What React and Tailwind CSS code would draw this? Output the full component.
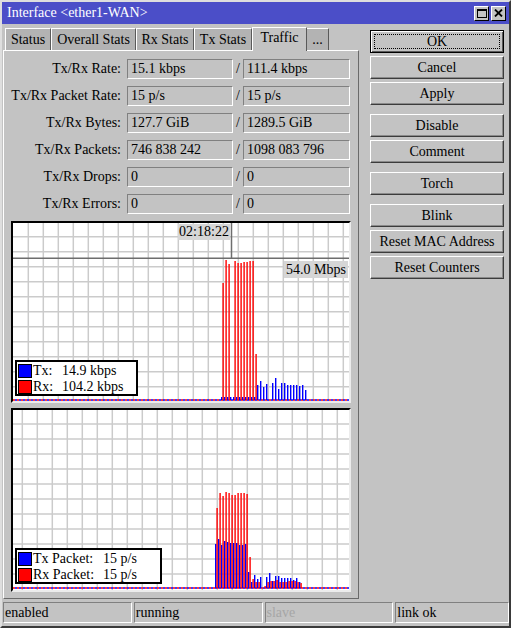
const G1_RED = [283, 260, 264, null, 261, 263, 263, 262, 262, 261, 261, 354];
const G1_BLUE = [
  397, 397, 397, 397, 397, 397, 397, 397, 397, 397, 397, 397,
  385, 381, 387, 384, null, 383, 378, 389, 383, 383, 385, 385, 385, 385, 386, 385, 390,
];
const G2_RED = [
  508, 493, 496, 492, 493, 495, 495, 493, 493, 493, 494, 557,
  579, 582, 582, null, 586, 582, 581, 581, 580, 582, 582, 582, 581, 581, 581, 582, 583,
];
const G2_BLUE = [
  544, 539, 545, 541, 542, 543, 543, 543, 545, 545, 544, 572,
  582, 575, 579, 577, null, 577, 573, 581, 576, 576, 578, 578, 578, 578, 580, 578, 582,
];

function range(start, end, step) {
  const out = [];
  for (let v = start; v <= end; v += step) out.push(v);
  return out;
}

function Chart({ ox, oy, w, h, gx, gy, base, blueX, red, blue, dark, children }) {
  return (
    <div className="relative bg-white" style={{ width: w, height: h }}>
      <svg width={w} height={h} viewBox={`${ox} ${oy} ${w} ${h}`} className="absolute inset-0">
        {range(gx, ox + w, 15).map((x) => (
          <line key={"v" + x} x1={x} y1={oy} x2={x} y2={oy + h} stroke="#cbcbcb" strokeWidth="1.5" />
        ))}
        {range(gy, base - 4, 15).map((y) => (
          <line key={"h" + y} x1={ox} y1={y} x2={ox + w} y2={y} stroke="#cbcbcb" strokeWidth="1.5" />
        ))}
        {dark && (
          <g stroke="#6e6e6e" strokeWidth="1.5">
            <line x1={ox} y1={dark.y} x2={ox + w} y2={dark.y} />
            <line x1={dark.x} y1={oy} x2={dark.x} y2={dark.y} />
          </g>
        )}
        <line x1={ox} y1={base} x2={ox + w} y2={base} stroke="#ff0000" strokeWidth="1.5" strokeDasharray="2 2" />
        <line x1={ox} y1={base} x2={ox + w} y2={base} stroke="#0000ff" strokeWidth="1.5" strokeDasharray="2 2" strokeDashoffset="2" />
        {blue.map((t, i) =>
          t == null ? null : (
            <rect key={"b" + i} x={blueX + 3 * i} y={t} width="1.4" height={base - t} fill="#0000ff" />
          )
        )}
        {red.map((t, i) =>
          t == null ? null : (
            <rect key={"r" + i} x={blueX + 1.4 + 3 * i} y={t} width="1.4" height={base - t} fill="#ff0000" />
          )
        )}
      </svg>
      {children}
    </div>
  );
}

function Legend({ rows, labelW, className }) {
  return (
    <div className={`absolute left-[2px] bg-white border-2 border-black pl-px pt-[2px] flex flex-col gap-[2px] ${className}`}>
      {rows.map((r) => (
        <div key={r.label} className="flex items-center h-[14px]">
          <div className={`w-[14px] h-[14px] border border-black ${r.color}`} />
          <div className="pl-px leading-[14px]" style={{ width: labelW }}>{r.label}</div>
          <div className="leading-[14px] pr-[6px]">{r.value}</div>
        </div>
      ))}
    </div>
  );
}

function Field({ children }) {
  return (
    <div className="h-5 border border-t-[#808080] border-l-[#808080] border-b-white border-r-white pl-[3px] leading-[18px] whitespace-nowrap overflow-hidden">
      {children}
    </div>
  );
}

function Row({ label, a, b }) {
  return (
    <div className="flex items-center h-5 mb-[7px]">
      <div className="w-[118px] text-right pr-px">{label}</div>
      <div className="w-[106px] ml-[5px]"><Field>{a}</Field></div>
      <div className="w-[10px] text-center">/</div>
      <div className="w-[107px]"><Field>{b}</Field></div>
    </div>
  );
}

function Btn({ children, className }) {
  return (
    <div className={`h-[23px] w-[134px] flex items-center justify-center border border-t-white border-l-white border-r-[#3c3c3c] border-b-[#3c3c3c] shadow-[inset_-1px_-1px_0_#8a8a8a] ${className}`}>
      {children}
    </div>
  );
}

const TABS = [
  ["Status", "w-[46px]"],
  ["Overall Stats", "w-[85px]"],
  ["Rx Stats", "w-[58px]"],
  ["Tx Stats", "w-[58px]"],
];

export default function App() {
  return (
    <div className="w-[511px] h-[628px] bg-[#c3c3c3] border-2 border-t-[#dedede] border-l-[#dedede] border-r-[#3a3a3a] border-b-[#3a3a3a] flex flex-col text-[14px] text-black leading-none overflow-hidden font-['Liberation_Serif','Times_New_Roman',serif]">
      <div className="h-[22px] bg-[#4b4ec8] flex items-center pl-[5px] text-white">
        <div className="flex-1">Interface &lt;ether1-WAN&gt;</div>
        <div className="flex gap-[2px] mr-[3px]">
          <div className="w-[15px] h-[15px] bg-[#c3c3c3] border border-t-white border-l-white border-r-black border-b-black flex items-center justify-center">
            <svg width="10" height="9" viewBox="0 0 10 9">
              <rect x="0.5" y="0.5" width="9" height="8" fill="none" stroke="black" />
              <rect x="0" y="0" width="10" height="2" fill="black" />
            </svg>
          </div>
          <div className="w-[15px] h-[15px] bg-[#c3c3c3] border border-t-white border-l-white border-r-black border-b-black flex items-center justify-center">
            <svg width="9" height="8" viewBox="0 0 9 8">
              <path d="M1 0.5 L8 7.5 M8 0.5 L1 7.5" stroke="black" strokeWidth="1.8" />
            </svg>
          </div>
        </div>
      </div>

      <div className="flex mt-[3px]">
        <div className="w-[356px] ml-px flex flex-col">
          <div className="flex items-end h-[23px] pl-[2px]">
            {TABS.map(([t, w]) => (
              <div key={t} className={`${w} h-[22px] bg-[#b3b3b3] border-t border-l border-t-white border-l-white border-r border-r-[#5a5a5a] flex items-center justify-center`}>
                {t}
              </div>
            ))}
            <div className="w-[55px] h-[24px] -mb-px relative z-10 bg-[#c3c3c3] border-t border-l border-t-white border-l-white border-r border-r-[#5a5a5a] flex items-start pt-[3px] justify-center">
              Traffic
            </div>
            <div className="w-[22px] h-[22px] bg-[#b3b3b3] border-t border-t-white border-r border-r-[#5a5a5a] flex items-end pb-[3px] justify-center">
              ...
            </div>
          </div>
          <div className="h-[549px] border border-t-white border-l-white border-r-[#6a6a6a] border-b-[#6a6a6a] pt-[8px]">
            <Row label="Tx/Rx Rate:" a="15.1 kbps" b="111.4 kbps" />
            <Row label="Tx/Rx Packet Rate:" a="15 p/s" b="15 p/s" />
            <Row label="Tx/Rx Bytes:" a="127.7 GiB" b="1289.5 GiB" />
            <Row label="Tx/Rx Packets:" a="746 838 242" b="1098 083 796" />
            <Row label="Tx/Rx Drops:" a="0" b="0" />
            <Row label="Tx/Rx Errors:" a="0" b="0" />

            <div className="ml-[7px] w-[340px] border-2 border-t-black border-l-black border-r-[#ececec] border-b-[#ececec]">
              <Chart ox={13} oy={223} w={336} h={178} gx={28.3} gy={236.7} base={400} blueX={221} red={G1_RED} blue={G1_BLUE} dark={{ x: 231.5, y: 258.3 }}>
                <div className="absolute left-[165px] top-px w-[52px] h-[16px] bg-[#d6d6d6] flex items-center justify-center">02:18:22</div>
                <div className="absolute left-[271px] top-[38px] w-[64px] h-[17px] bg-[#d6d6d6] flex items-center justify-center">54.0 Mbps</div>
                <Legend
                  className="top-[137px] w-[123px]"
                  labelW={30}
                  rows={[
                    { label: "Tx:", value: "14.9 kbps", color: "bg-[#0000ff]" },
                    { label: "Rx:", value: "104.2 kbps", color: "bg-[#ff0000]" },
                  ]}
                />
              </Chart>
            </div>

            <div className="ml-[7px] mt-[5px] w-[340px] border-2 border-t-black border-l-black border-r-[#ececec] border-b-[#ececec]">
              <Chart ox={13} oy={410} w={336} h={180} gx={22.3} gy={424} base={588} blueX={215} red={G2_RED} blue={G2_BLUE}>
                <Legend
                  className="top-[138px] w-[147px]"
                  labelW={71}
                  rows={[
                    { label: "Tx Packet:", value: "15 p/s", color: "bg-[#0000ff]" },
                    { label: "Rx Packet:", value: "15 p/s", color: "bg-[#ff0000]" },
                  ]}
                />
              </Chart>
            </div>
          </div>
        </div>

        <div className="ml-[11px] mt-[3px] flex flex-col">
          <div className="relative h-[23px] w-[134px] flex items-center justify-center border border-black shadow-[inset_1px_1px_0_#fff,inset_-1px_-1px_0_#5a5a5a]">
            <div className="absolute inset-[3px] border border-dotted border-black" />
            OK
          </div>
          <Btn className="mt-[3px]">Cancel</Btn>
          <Btn className="mt-[3px]">Apply</Btn>
          <Btn className="mt-[9px]">Disable</Btn>
          <Btn className="mt-[3px]">Comment</Btn>
          <Btn className="mt-[9px]">Torch</Btn>
          <Btn className="mt-[9px]">Blink</Btn>
          <Btn className="mt-[3px]">Reset MAC Address</Btn>
          <Btn className="mt-[3px]">Reset Counters</Btn>
        </div>
      </div>

      <div className="flex gap-[2px] ml-px mt-[3px] h-[21px]">
        {[
          ["enabled", "w-[129px]", "text-black"],
          ["running", "w-[129px]", "text-black"],
          ["slave", "w-[129px]", "text-[#a6a6a6]"],
          ["link ok", "w-[114px]", "text-black"],
        ].map(([t, w, c]) => (
          <div key={t} className={`${w} ${c} h-full border border-t-[#808080] border-l-[#808080] border-b-white border-r-white pl-px flex items-center`}>
            {t}
          </div>
        ))}
      </div>
    </div>
  );
}
